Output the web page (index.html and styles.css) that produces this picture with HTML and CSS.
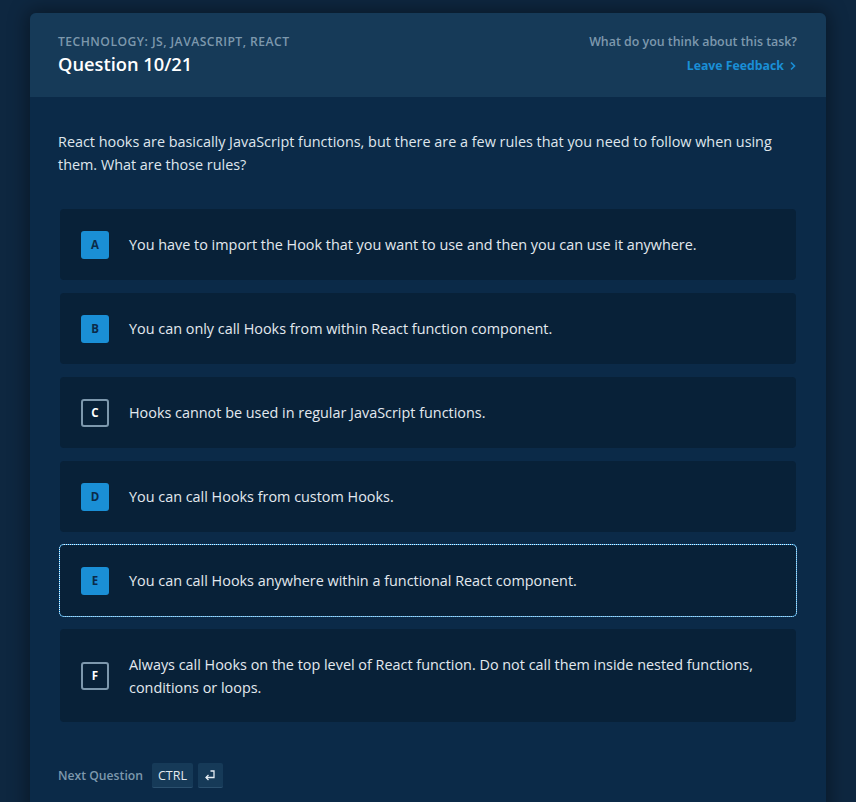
FILE: index.html
```html
<!DOCTYPE html>
<html lang="en">
<head>
<meta charset="utf-8">
<title>Question 10/21</title>
<link rel="stylesheet" href="styles.css">
</head>
<body>
<div class="card">
  <header class="card-head">
    <div class="head-left">
      <div class="tech">Technology: JS, JavaScript, React</div>
      <h1 class="title">Question 10/21</h1>
    </div>
    <div class="head-right">
      <div class="ask">What do you think about this task?</div>
      <a class="feedback" href="#">Leave Feedback
        <svg class="chev" width="8" height="10" viewBox="0 0 8 10"><path d="M2 1.5 L5.5 5 L2 8.5" fill="none" stroke="currentColor" stroke-width="1.6"/></svg>
      </a>
    </div>
  </header>
  <main class="card-body">
    <p class="question">React hooks are basically JavaScript functions, but there are a few rules that you need to follow when using them. What are those rules?</p>
    <ul class="options">
      <li class="option"><span class="badge">A</span><span class="opt-text">You have to import the Hook that you want to use and then you can use it anywhere.</span></li>
      <li class="option"><span class="badge">B</span><span class="opt-text">You can only call Hooks from within React function component.</span></li>
      <li class="option"><span class="badge badge-outline">C</span><span class="opt-text">Hooks cannot be used in regular JavaScript functions.</span></li>
      <li class="option"><span class="badge">D</span><span class="opt-text">You can call Hooks from custom Hooks.</span></li>
      <li class="option focused"><span class="badge">E</span><span class="opt-text">You can call Hooks anywhere within a functional React component.</span></li>
      <li class="option tall"><span class="badge badge-outline">F</span><span class="opt-text">Always call Hooks on the top level of React function. Do not call them inside nested functions, conditions or loops.</span></li>
    </ul>
    <div class="next">
      <span class="next-label">Next Question</span>
      <span class="key">CTRL</span>
      <span class="key key-icon"><svg width="14" height="14" viewBox="0 0 14 14"><path d="M7.5 3 H11 V9.5 H3" fill="none" stroke="#e6edf3" stroke-width="1.3"/><path d="M5.5 7 L3 9.5 L5.5 12" fill="none" stroke="#e6edf3" stroke-width="1.3"/></svg></span>
    </div>
  </main>
</div>
</body>
</html>
```
FILE: styles.css
```css
html, body {
  margin: 0;
  padding: 0;
}
body {
  background: #0e2740;
  font-family: "Open Sans", "Noto Sans", sans-serif;
  color: #e3e9ef;
  height: 802px;
  overflow: hidden;
}
.card {
  margin: 13px 30px 0 30px;
  border-radius: 6px 6px 0 0;
  background: #0b2a48;
  box-shadow: 0 0 18px 4px rgba(0, 0, 0, 0.35);
  min-height: 800px;
}
.card-head {
  background: #163a58;
  border-radius: 6px 6px 0 0;
  display: flex;
  justify-content: space-between;
  padding: 20px 29px 0 28px;
  height: 84px;
  box-sizing: border-box;
}
.tech {
  font-size: 12.2px;
  line-height: 18px;
  text-transform: uppercase;
  letter-spacing: 0.45px;
  color: #7d98ad;
  font-weight: 600;
}
.title {
  margin: 0;
  font-size: 18.3px;
  line-height: 26px;
  font-weight: 600;
  color: #ffffff;
}
.head-right {
  display: flex;
  flex-direction: column;
  align-items: flex-end;
}
.ask {
  font-size: 12.4px;
  line-height: 18px;
  color: #7d98ad;
  font-weight: 600;
}
.feedback {
  margin-top: 5px;
  font-size: 12.3px;
  line-height: 20px;
  font-weight: 700;
  color: #1a8fd6;
  text-decoration: none;
  display: flex;
  align-items: center;
  gap: 5px;
}
.chev {
  display: block;
}
.card-body {
  padding: 33px 28px 0 28px;
}
.question {
  margin: 0;
  font-size: 14.4px;
  line-height: 23px;
  color: #dfe6ed;
}
.options {
  list-style: none;
  margin: 33px 2px 0;
  padding: 0;
  display: flex;
  flex-direction: column;
  gap: 13px;
}
.option {
  background: #082138;
  border-radius: 4px;
  min-height: 71px;
  box-sizing: border-box;
  padding: 21px 21px;
  display: flex;
  align-items: center;
  gap: 20px;
}
.option.tall {
  min-height: 93px;
}
.option.focused {
  box-shadow: 0 0 0 1px #1a8fd6;
  outline: 1px dotted #e8f4ff;
  outline-offset: 0;
}
.badge {
  flex: none;
  width: 28px;
  height: 28px;
  box-sizing: border-box;
  border-radius: 3px;
  background: #1a8fd6;
  color: #0b2a48;
  font-size: 11.5px;
  font-weight: 700;
  display: flex;
  align-items: center;
  justify-content: center;
}
.badge-outline {
  background: transparent;
  border: 2px solid #7d98ad;
  color: #ffffff;
}
.opt-text {
  font-size: 14.4px;
  line-height: 23px;
  color: #e3e9ef;
}
.next {
  margin-top: 41px;
  display: flex;
  align-items: center;
  gap: 5px;
}
.next-label {
  font-size: 12.2px;
  font-weight: 600;
  color: #7d98ad;
  margin-right: 4px;
}
.key {
  height: 25px;
  box-sizing: border-box;
  background: #163a58;
  border-bottom: 1px solid #2b506e;
  border-radius: 2px;
  font-size: 12.5px;
  color: #e3e9ef;
  display: flex;
  align-items: center;
  justify-content: center;
  padding: 0 6px;
}
.key-icon {
  width: 25px;
  padding: 0;
}
```
